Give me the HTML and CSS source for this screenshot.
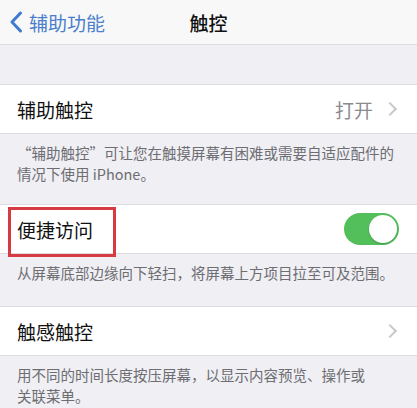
FILE: index.html
```html
<!DOCTYPE html>
<html lang="zh-CN">
  <head>
    <meta charset="UTF-8" />
    <meta name="viewport" content="width=device-width, initial-scale=1.0" />
    <title>触控</title>
    <link rel="stylesheet" href="styles.css">
  </head>
  <body>
    <div class="navbar">
      <div class="back">
        <svg class="back-icon" width="14" height="22" viewBox="0 0 14 22">
          <path d="M11.5 2 L3 11 L11.5 20" fill="none" stroke="#3f7bd0" stroke-width="3" stroke-linecap="round" stroke-linejoin="round" />
        </svg>
        <span>辅助功能</span>
      </div>
      <div class="title">触控</div>
    </div>

    <div class="spacer"></div>

    <div class="row">
      <span class="label">辅助触控</span>
      <span class="value">打开</span>
      <span class="chevron"></span>
    </div>
    <div class="note">“辅助触控”可让您在触摸屏幕有困难或需要自适应配件的<br />情况下使用 iPhone。</div>

    <div class="row">
      <span class="label">便捷访问</span>
      <span class="toggle"><span class="knob"></span></span>
      <div class="highlight"></div>
    </div>
    <div class="note single">从屏幕底部边缘向下轻扫，将屏幕上方项目拉至可及范围。</div>

    <div class="row">
      <span class="label">触感触控</span>
      <span class="chevron"></span>
    </div>
    <div class="note">用不同的时间长度按压屏幕，以显示内容预览、操作或<br />关联菜单。</div>
  </body>
</html>
```

FILE: styles.css
```css
body {
  margin: 0;
  background-color: #efeff4;
  font-family: "Noto Sans CJK SC", "Noto Sans", sans-serif;
  color: #111;
  overflow: hidden;
}

.navbar {
  position: relative;
  height: 44px;
  background-color: #f8f8f8;
  border-bottom: 1px solid #dcdce0;
  display: flex;
  align-items: center;
}
.back {
  display: flex;
  align-items: center;
  padding-left: 9px;
  color: #4a7fcb;
  font-size: 19px;
}
.back-icon {
  margin-right: 6px;
}
.title {
  position: absolute;
  left: 0;
  right: 0;
  text-align: center;
  font-size: 19px;
  font-weight: 500;
  pointer-events: none;
}

.spacer {
  height: 39px;
}

.row {
  position: relative;
  height: 48px;
  background-color: #fff;
  border-top: 1px solid #dcdce0;
  border-bottom: 1px solid #dcdce0;
  display: flex;
  align-items: center;
  padding: 0 18px 0 17px;
}
.label {
  font-size: 19px;
  flex: 1;
}
.value {
  font-size: 19px;
  color: #8a8a8f;
  margin-right: 12px;
}
.chevron {
  width: 8px;
  height: 8px;
  border-top: 2px solid #c7c7cc;
  border-right: 2px solid #c7c7cc;
  transform: rotate(45deg);
  margin-right: 4px;
}

.toggle {
  position: relative;
  width: 55px;
  height: 32px;
  border-radius: 16px;
  background-color: #52bf5b;
}
.knob {
  position: absolute;
  right: 2px;
  top: 2px;
  width: 28px;
  height: 28px;
  border-radius: 50%;
  background-color: #fff;
  box-shadow: 0 1px 2px rgba(0, 0, 0, 0.2);
}

.highlight {
  position: absolute;
  left: 8px;
  top: 2px;
  width: 102px;
  height: 44px;
  border: 3px solid #d83a42;
}

.note {
  padding: 8px 0 20px 17px;
  font-size: 14.5px;
  line-height: 21px;
  color: #6d6d72;
  white-space: nowrap;
}
.note.single {
  padding-bottom: 23px;
}
```
